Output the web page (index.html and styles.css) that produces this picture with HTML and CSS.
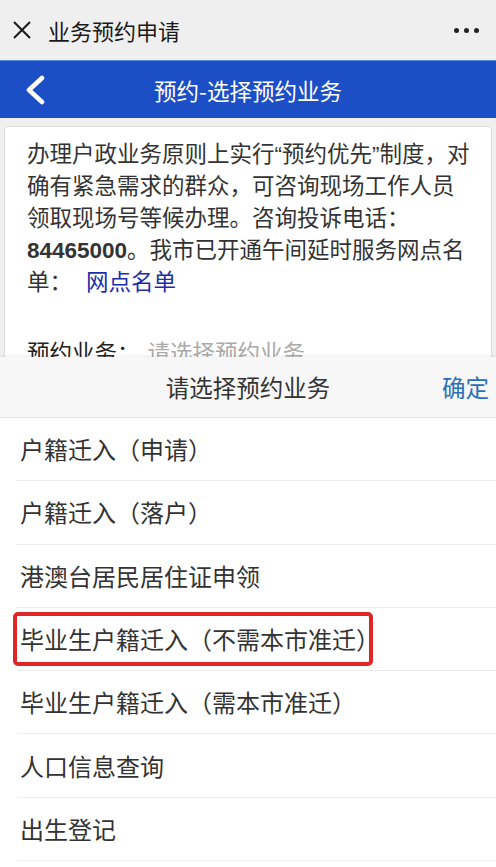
FILE: index.html
```html
<!DOCTYPE html>
<html lang="zh-CN">
<head>
<meta charset="utf-8">
<title>业务预约申请</title>
<link rel="stylesheet" href="styles.css">
</head>
<body>
<div class="page">
  <header class="wx-bar">
    <svg class="wx-close" width="18" height="18" viewBox="0 0 18 18"><path d="M1 1L17 17M17 1L1 17" stroke="#1a1a1a" stroke-width="2" fill="none"/></svg>
    <span class="wx-title">业务预约申请</span>
    <span class="wx-more"><i></i><i></i><i></i></span>
  </header>
  <div class="nav-bar">
    <svg class="nav-back" width="22" height="30" viewBox="0 0 22 30"><path d="M18 3L5 15L18 27" stroke="#fff" stroke-width="4.5" fill="none" stroke-linecap="round" stroke-linejoin="round"/></svg>
    <span class="nav-title">预约-选择预约业务</span>
  </div>
  <div class="content">
    <div class="card">
      <p class="notice">办理户政业务原则上实行“预约优先”制度，对确有紧急需求的群众，可咨询现场工作人员领取现场号等候办理。咨询投诉电话：<b>84465000</b>。我市已开通午间延时服务网点名单：<a class="link">网点名单</a></p>
      <div class="field"><span class="field-label">预约业务：</span><span class="field-ph">请选择预约业务</span></div>
    </div>
  </div>
  <div class="sheet">
    <div class="sheet-head">
      <span class="sheet-title">请选择预约业务</span>
      <span class="sheet-ok">确定</span>
    </div>
    <ul class="options">
      <li>户籍迁入（申请）</li>
      <li>户籍迁入（落户）</li>
      <li>港澳台居民居住证申领</li>
      <li class="marked"><span class="mark">毕业生户籍迁入（不需本市准迁）</span></li>
      <li>毕业生户籍迁入（需本市准迁）</li>
      <li>人口信息查询</li>
      <li>出生登记</li>
    </ul>
  </div>
</div>
</body>
</html>
```
FILE: styles.css
```css
* { box-sizing: border-box; }
html, body { margin: 0; padding: 0; }
body {
  width: 496px;
  height: 867px;
  overflow: hidden;
  font-family: "Noto Sans CJK SC", "Noto Sans", sans-serif;
  color: #333;
  background: #fff;
}
.page { position: relative; height: 867px; overflow: hidden; }
.wx-bar {
  height: 60px;
  background: #efefef;
  display: flex;
  align-items: center;
  padding: 0 17px 0 13px;
}
.wx-close { flex: none; }
.wx-title {
  margin-left: 17px;
  font-size: 22px;
  color: #1a1a1a;
  flex: 1;
}
.wx-more { display: flex; gap: 5px; }
.wx-more i { width: 5px; height: 5px; border-radius: 50%; background: #222; display: block; }
.nav-bar {
  height: 58px;
  background: #1c4ec6;
  display: flex;
  align-items: center;
  position: relative;
  border-top: 1px solid #5a86dc;
}
.nav-back { margin-left: 24px; }
.nav-title {
  position: absolute;
  left: 0; right: 0;
  text-align: center;
  color: #fff;
  font-size: 22.5px;
}
.content {
  background: #f0f0f0;
  padding: 8px 4px 0 4px;
  height: 300px;
}
.card {
  background: #fff;
  border: 1px solid #dcdcdc;
  border-radius: 3px;
  padding: 12px 17px 0 22px;
  height: 300px;
}
.notice {
  margin: 0;
  font-family: "Liberation Sans", "Noto Sans CJK SC", sans-serif;
  font-size: 22.5px;
  line-height: 32px;
  color: #333;
}
.notice b { font-weight: bold; }
.link { color: #1c2ea8; margin-left: 14px; }
.field { margin-top: 36px; font-size: 22.5px; line-height: 32px; }
.field-label { color: #222; }
.field-ph { color: #aaa; margin-left: 8px; }
.sheet {
  position: absolute;
  left: 0; right: 0; top: 357px; bottom: 0;
  background: #fff;
  box-shadow: 0 -1px 3px rgba(0,0,0,0.08);
}
.sheet-head {
  height: 61px;
  background: #f7f7f7;
  border-bottom: 1px solid #e6e6e6;
  display: flex;
  align-items: center;
  justify-content: center;
  position: relative;
}
.sheet-title { font-size: 23.5px; color: #333; }
.sheet-ok {
  position: absolute;
  right: 7px;
  font-size: 23.5px;
  color: #2a6fb8;
}
.options { list-style: none; margin: 0; padding: 0 0 0 17px; }
.options li {
  height: 63.3px;
  display: flex;
  align-items: center;
  border-bottom: 1px solid #ececec;
  font-size: 24px;
  line-height: 32px;
  color: #333;
  padding-left: 3px;
}
.mark {
  position: relative;
}
.mark::before {
  content: "";
  position: absolute;
  left: -7px; right: 7px; top: -11px; bottom: -11px;
  border: 4px solid #e02626;
  border-radius: 5px;
}
```
